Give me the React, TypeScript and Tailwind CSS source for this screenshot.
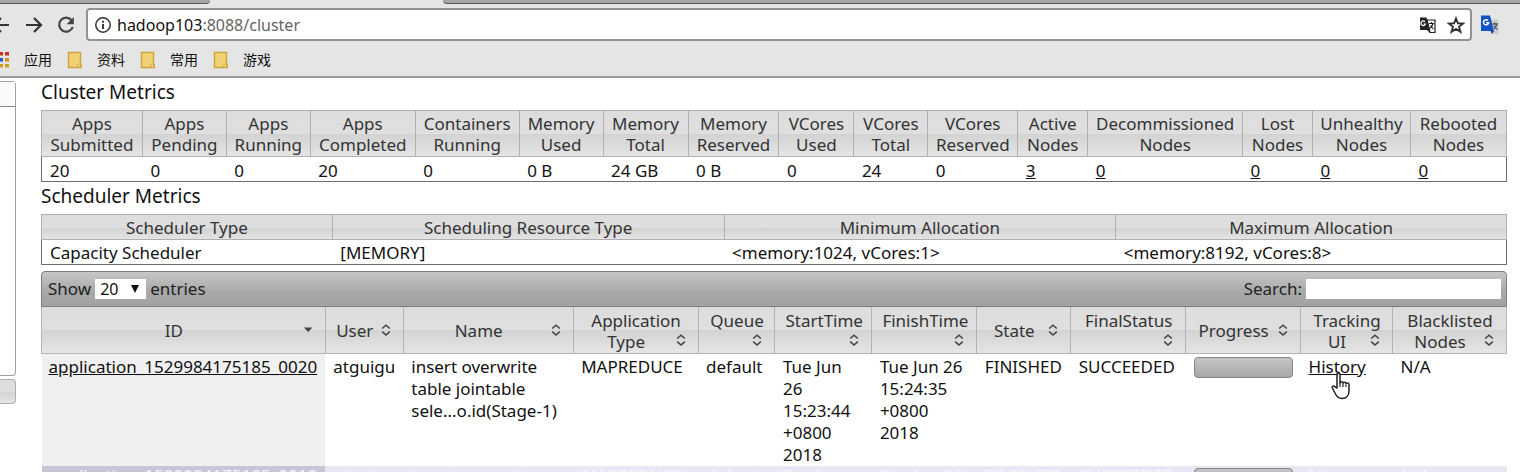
import React from "react";

const HEAD_BG = "bg-[linear-gradient(to_bottom,#dddddd_0%,#dfdfdf_50%,#d3d3d3_51%,#e5e5e5_100%)]";

function Cols({ widths }: { widths: number[] }) {
  const total = widths.reduce((a, b) => a + b, 0);
  return (
    <colgroup>
      {widths.map((w, i) => (
        <col key={i} style={{ width: `${(w / total) * 100}%` }} />
      ))}
    </colgroup>
  );
}

const metrics: { w: number; head: [string, string]; value: string; link?: boolean }[] = [
  { w: 101, head: ["Apps", "Submitted"], value: "20" },
  { w: 84, head: ["Apps", "Pending"], value: "0" },
  { w: 84, head: ["Apps", "Running"], value: "0" },
  { w: 105, head: ["Apps", "Completed"], value: "20" },
  { w: 104, head: ["Containers", "Running"], value: "0" },
  { w: 84, head: ["Memory", "Used"], value: "0 B" },
  { w: 85, head: ["Memory", "Total"], value: "24 GB" },
  { w: 91, head: ["Memory", "Reserved"], value: "0 B" },
  { w: 75, head: ["VCores", "Used"], value: "0" },
  { w: 74, head: ["VCores", "Total"], value: "24" },
  { w: 90, head: ["VCores", "Reserved"], value: "0" },
  { w: 70, head: ["Active", "Nodes"], value: "3", link: true },
  { w: 155, head: ["Decommissioned", "Nodes"], value: "0", link: true },
  { w: 70, head: ["Lost", "Nodes"], value: "0", link: true },
  { w: 98, head: ["Unhealthy", "Nodes"], value: "0", link: true },
  { w: 96, head: ["Rebooted", "Nodes"], value: "0", link: true },
];

const scheduler = [
  { w: 291, head: "Scheduler Type", value: "Capacity Scheduler" },
  { w: 392, head: "Scheduling Resource Type", value: "[MEMORY]" },
  { w: 392, head: "Minimum Allocation", value: "<memory:1024, vCores:1>" },
  { w: 391, head: "Maximum Allocation", value: "<memory:8192, vCores:8>" },
];

const appColumns: { w: number; lines: string[]; sorted?: boolean }[] = [
  { w: 284, lines: ["ID"], sorted: true },
  { w: 78, lines: ["User"] },
  { w: 170, lines: ["Name"] },
  { w: 125, lines: ["Application", "Type"] },
  { w: 77, lines: ["Queue", ""] },
  { w: 97, lines: ["StartTime", ""] },
  { w: 105, lines: ["FinishTime", ""] },
  { w: 94, lines: ["State"] },
  { w: 115, lines: ["FinalStatus", ""] },
  { w: 115, lines: ["Progress"] },
  { w: 92, lines: ["Tracking", "UI"] },
  { w: 114, lines: ["Blacklisted", "Nodes"] },
];

function SortIcon({ sorted }: { sorted?: boolean }) {
  return (
    <svg viewBox="0 0 16 16" className="h-4 w-4 shrink-0" aria-hidden="true">
      {sorted ? (
        <path d="M4 4.500h8.400L8.200 9z" fill="#444" />
      ) : (
        <path d="M4.200 5.500 8 2.200l3.800 3.300M4.200 8.700 8 12l3.800-3.300" fill="none" stroke="#444" strokeWidth="1.6" />
      )}
    </svg>
  );
}

function GridTable({ children }: { children: React.ReactNode }) {
  return (
    <table className="w-full table-fixed border-collapse border border-[#6f6f6f] leading-[21px]">
      {children}
    </table>
  );
}

function Folder() {
  return (
    <svg viewBox="0 0 16 18" className="h-[18px] w-4" aria-hidden="true">
      <path d="M1.500 1.500h12V12l.7 1.500v3H1.500z" fill="#f0d173" stroke="#cfa53c" strokeWidth="1.4" />
      <path d="M11 16.500v-2.800c0-1 2.600-1 2.600 0v2.800z" fill="#f6dd8c" stroke="#cfa53c" />
    </svg>
  );
}

function PageTranslateIcon() {
  return (
    <svg viewBox="0 0 18 18" className="h-[18px] w-[18px]" aria-hidden="true">
      <path d="M8 4h8v12.500h-5z" fill="#fff" stroke="#222" strokeWidth="1.2" />
      <path d="M1 1.500h6.500L11 14H1z" fill="#222" />
      <path d="M8 14h3v3z" fill="#222" />
      <path d="M6 5.800A2.300 2.300 0 1 0 6.400 8H4.500" fill="none" stroke="#fff" strokeWidth="1.200" />
      <path d="M10 7.500h5M12.500 6v1.500M14 7.500c-.5 2-1.500 3.800-3 4.800M11.500 9.500c.8 1.500 1.800 2.500 3 3.500" fill="none" stroke="#222" strokeWidth="1.200" />
    </svg>
  );
}

function GoogleTranslateIcon() {
  return (
    <svg viewBox="0 0 20 20" className="h-5 w-5" aria-hidden="true">
      <path d="M9 4.500h9.500V19H13z" fill="#cdcdcd" />
      <path d="M1 .5h9L14 16H1z" fill="#1254c4" />
      <path d="M10.500 16H14l-2 3z" fill="#0b3a94" />
      <path d="M8 5.500A2.600 2.600 0 1 0 8.600 7.800H6.200" fill="none" stroke="#fff" strokeWidth="1.500" />
      <path d="M12.500 9h5.500M15 7.500V9M17 9c-.5 2.200-1.500 3.800-3 5M13.800 10.500c.8 1.800 2 3 3.700 4" fill="none" stroke="#4f5f66" strokeWidth="1.300" />
    </svg>
  );
}

function Chrome() {
  const grid = ["#c8321f", "#c8321f", "#1f5fc8", "#e08a1a", "#d29a1a", "#d29a1a"];
  return (
    <header className="border-b-2 border-[#9a9a9a] bg-[#e5e5e5]">
      <div className="flex h-1">
        <div className="w-[210px] rounded-br border-b border-[#555] bg-[#a6a6a6]" />
        <div className="w-[233px]" />
        <div className="flex-1 rounded-bl border-b border-[#555] bg-[#a6a6a6]" />
      </div>
      <div className="flex items-center pt-1">
        <div className="flex w-[86px] shrink-0 items-center overflow-hidden">
          <button aria-label="Back" className="-ml-2 w-[18px]">
            <svg viewBox="0 0 18 18" className="h-[18px] w-[18px]"><path d="M17 9H2M9 2 2 9l7 7" fill="none" stroke="#333" strokeWidth="2.2" /></svg>
          </button>
          <button aria-label="Forward" className="ml-[15px]">
            <svg viewBox="0 0 18 18" className="h-[18px] w-[18px]"><path d="M1 9h15M9 2l7 7-7 7" fill="none" stroke="#333" strokeWidth="2.2" /></svg>
          </button>
          <button aria-label="Reload" className="ml-[14px]">
            <svg viewBox="0 0 18 18" className="h-[18px] w-[18px]"><path d="M14.800 4.500A7 7 0 1 0 15.800 11" fill="none" stroke="#444" strokeWidth="2.2" /><path d="M16.800 1v7.200H9.600z" fill="#444" /></svg>
          </button>
        </div>
        <div className="flex h-[33px] flex-1 items-center rounded border-2 border-[#929292] bg-white pl-1.5 pr-[5px]">
          <svg viewBox="0 0 18 18" className="h-[18px] w-[18px]" aria-hidden="true">
            <circle cx="9" cy="9" r="7.200" fill="none" stroke="#333" strokeWidth="1.500" />
            <path d="M9 8v5M9 4.800v1.900" stroke="#333" strokeWidth="1.900" />
          </svg>
          <div className="ml-[5px] flex-1 text-[16px] leading-6 text-[#666]">
            <span className="text-[#111]">hadoop103</span>:8088/cluster
          </div>
          <button aria-label="Translate this page" className="mr-2.5">
            <PageTranslateIcon />
          </button>
          <button aria-label="Bookmark this page">
            <svg viewBox="0 0 18 18" className="h-[18px] w-[18px]"><path d="m9 2.500 1.900 4.800 5.100.3-4 3.200 1.400 5L9 13l-4.400 2.800 1.400-5-4-3.200 5.100-.3z" fill="none" stroke="#333" strokeWidth="1.900" /></svg>
          </button>
        </div>
        <button aria-label="Google Translate" className="ml-2 mr-5">
          <GoogleTranslateIcon />
        </button>
      </div>
      <nav className="flex h-[35px] items-center pt-0.5 text-[14px] text-[#111]">
        <a href="#apps" className="flex items-center">
          <svg viewBox="0 0 9 16" className="h-4 w-[9px]" aria-hidden="true">
            {grid.map((c, i) => (
              <rect key={i} x={(i % 2) * 5} y={Math.floor(i / 2) * 6} width={i % 2 ? 4 : 3} height="3.500" fill={c} />
            ))}
          </svg>
          <span className="ml-[15px]">应用</span>
        </a>
        {["资料", "常用", "游戏"].map((name) => (
          <a key={name} href="#bookmark" className="ml-[15px] flex items-center gap-[14px]">
            <Folder />
            {name}
          </a>
        ))}
      </nav>
    </header>
  );
}

function ProgressBar() {
  return (
    <div className="h-[21px] rounded border border-[#858585] bg-[linear-gradient(to_bottom,#c4c4c4,#a8a8a8)]" />
  );
}

function AppsTable() {
  const cell = "px-2 pt-0.5 pb-0";
  return (
    <table className="w-full table-fixed border-collapse text-left">
      <Cols widths={appColumns.map((c) => c.w)} />
      <thead>
        <tr className={HEAD_BG}>
          {appColumns.map((c) => (
            <th key={c.lines[0]} className="h-[46px] border border-t-0 border-[#b4b4b4] p-0 align-middle font-normal text-[#333]">
              <button className="block w-full pl-1.5 pr-[9px] pt-0.5 text-center leading-[21px]">
                {c.lines.map((line, i) =>
                  i === c.lines.length - 1 ? (
                    <span key={i} className="flex h-[21px] items-center">
                      <span className="flex-1">{line}</span>
                      <SortIcon sorted={c.sorted} />
                    </span>
                  ) : (
                    <span key={i} className="block whitespace-nowrap pl-1">{line}</span>
                  )
                )}
              </button>
            </th>
          ))}
        </tr>
      </thead>
      <tbody className="align-top leading-[22px]">
        <tr className="text-[#111]">
          <td className="bg-[#f0f0f0] pb-0 pl-[7px] pr-0 pt-0.5"><a href="#app" className="underline">application_1529984175185_0020</a></td>
          <td className={cell}>atguigu</td>
          <td className={cell}>insert overwrite<br />table jointable<br />sele...o.id(Stage-1)</td>
          <td className={cell}>MAPREDUCE</td>
          <td className={cell}>default</td>
          <td className={cell}>Tue Jun<br />26<br />15:23:44<br />+0800<br />2018</td>
          <td className="whitespace-nowrap px-2 pb-0 pt-0.5">Tue Jun 26<br />15:24:35<br />+0800<br />2018</td>
          <td className={cell}>FINISHED</td>
          <td className={cell}>SUCCEEDED</td>
          <td className="px-2 pt-[3px]"><ProgressBar /></td>
          <td className={cell}>
            <div className="relative">
              <a href="#history" className="underline">History</a>
              <svg viewBox="0 0 20 28" className="absolute left-[22px] top-4 h-7 w-5" aria-hidden="true">
                <path
                  d="M6 16V2.600C6 .8 9 .8 9 2.600V11c0-1.800 3-1.700 3 .3 0-1.500 3-1.400 3 .5 0-1.300 3-1.200 3 .8v6.400c0 4-2.400 7.500-7 7.500-3.600 0-5.300-2-6.500-4.500L1.400 16c-.8-1.800 1.300-2.600 2.500-1.300z"
                  fill="#fff" stroke="#222" strokeWidth="1.500" strokeLinejoin="round"
                />
                <path d="M9 10.500V15M12 11.500V15M15 12.500V15" stroke="#222" strokeWidth="1.200" />
              </svg>
            </div>
          </td>
          <td className={cell}>N/A</td>
        </tr>
        <tr className="bg-[#e8e8f5] leading-[20px] text-[#f5f5fa]">
          <td className="bg-[#c6c6d8] pl-[7px]"><a href="#app">application_1529984175185_0019</a></td>
          <td className="px-2">atguigu</td>
          <td className="px-2">insert overwrite</td>
          <td className="px-2">MAPREDUCE</td>
          <td className="px-2">default</td>
          <td className="px-2">Tue Jun</td>
          <td className="whitespace-nowrap px-2">Tue Jun 26</td>
          <td className="px-2">FINISHED</td>
          <td className="px-2">SUCCEEDED</td>
          <td className="px-2 pt-0.5"><ProgressBar /></td>
          <td className="px-2"><a href="#history">History</a></td>
          <td className="px-2">N/A</td>
        </tr>
      </tbody>
    </table>
  );
}

export default function App() {
  return (
    <div className="flex h-screen flex-col overflow-hidden bg-white font-['Noto_Sans','Noto_Sans_CJK_SC',sans-serif] text-[17px] text-[#111]">
      <Chrome />
      <div className="flex min-h-0 flex-1 items-start">
        <aside className="w-4 shrink-0 pt-[3px]">
          <div className="rounded-r border border-l-0 border-[#a0a0a0]">
            <div className="h-[25px] border-b border-[#8c8c8c] bg-[#fafafa]" />
            <div className="h-[268px]" />
          </div>
          <div className={`mt-[3px] h-[25px] rounded-r border border-l-0 border-[#b0b0b0] ${HEAD_BG}`} />
        </aside>
        <main className="ml-[25px] mr-[13px] min-w-0 flex-1">
          <h2 className="pb-[5px] pt-px text-[19px] leading-[26px]">Cluster Metrics</h2>
          <GridTable>
            <Cols widths={metrics.map((m) => m.w)} />
            <thead>
              <tr className={HEAD_BG}>
                {metrics.map((m) => (
                  <th key={m.head.join()} className="border border-[#b0b0b0] px-0 pb-px pt-0.5 font-normal text-[#333]">
                    {m.head[0]}
                    <br />
                    {m.head[1]}
                  </th>
                ))}
              </tr>
            </thead>
            <tbody>
              <tr>
                {metrics.map((m) => (
                  <td key={m.head.join()} className="px-2 pb-0 pt-[3px]">
                    {m.link ? <a href="#nodes" className="underline">{m.value}</a> : m.value}
                  </td>
                ))}
              </tr>
            </tbody>
          </GridTable>
          <h2 className="pb-[5px] pt-px text-[19px] leading-[26px]">Scheduler Metrics</h2>
          <GridTable>
            <Cols widths={scheduler.map((s) => s.w)} />
            <thead>
              <tr className={HEAD_BG}>
                {scheduler.map((s) => (
                  <th key={s.head} className="border border-[#b0b0b0] pb-px pt-0.5 font-normal text-[#333]">{s.head}</th>
                ))}
              </tr>
            </thead>
            <tbody>
              <tr>
                {scheduler.map((s) => (
                  <td key={s.head} className="px-2 pb-px pt-0.5">{s.value}</td>
                ))}
              </tr>
            </tbody>
          </GridTable>
          <div className="mt-1.5 flex h-9 items-center justify-between rounded-t border border-[#7d7d7d] bg-[linear-gradient(to_bottom,#c6c6c6,#a8a8a8_60%,#a2a2a2)] pl-1.5 pr-[5px] text-[#222]">
            <label className="flex items-center gap-1">
              Show
              <span className="relative flex">
                <select className="h-[20px] w-[51px] appearance-none bg-white pl-[5px] text-[16px] leading-[20px] text-[#111]">
                  <option>20</option>
                </select>
                <svg viewBox="0 0 8 8" className="pointer-events-none absolute right-[7px] top-1.5 h-2 w-2" aria-hidden="true">
                  <path d="M0 0h8L4 8z" fill="#111" />
                </svg>
              </span>
              entries
            </label>
            <label className="flex items-center gap-1">
              Search:
              <input type="text" className="h-[20px] w-[195px] bg-white px-1" />
            </label>
          </div>
          <AppsTable />
        </main>
      </div>
    </div>
  );
}
